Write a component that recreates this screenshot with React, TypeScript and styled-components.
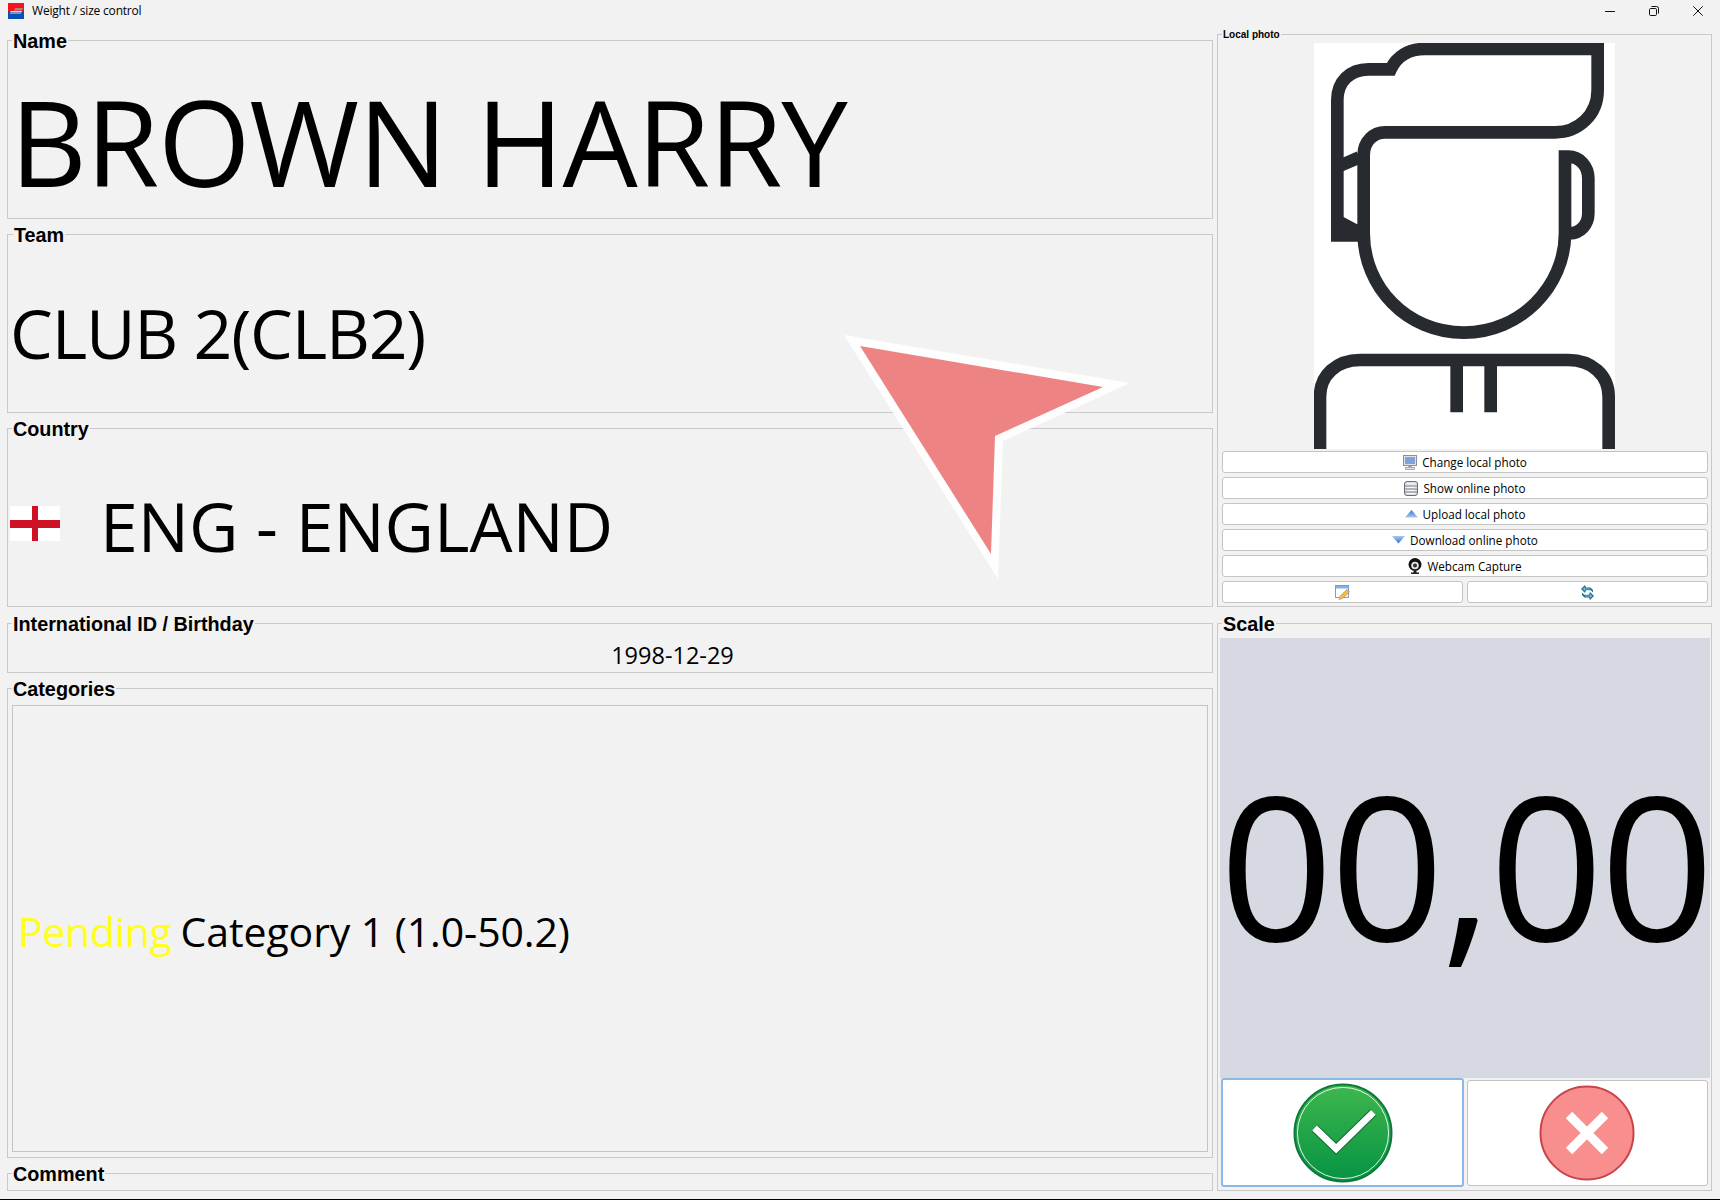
import React from "react";
import styled, { createGlobalStyle } from "styled-components";

const Global = createGlobalStyle`
  html, body { margin: 0; padding: 0; background: #f2f2f2; }
  * { box-sizing: border-box; }
`;

const UI = `"Open Sans", "Noto Sans", sans-serif`;

const Page = styled.div`
  width: 1720px;
  height: 1200px;
  background: #f2f2f2;
  border-bottom: 1px solid #000;
  display: flex;
  flex-direction: column;
  position: relative;
  overflow: hidden;
  font-family: ${UI};
  color: #000;
`;

const TitleBar = styled.header`
  height: 27px;
  flex: none;
  display: flex;
  align-items: center;
  padding: 0 17px 5px 8px;
  gap: 8px;
  font-size: 12px;
  letter-spacing: -0.2px;
  line-height: 16px;
`;

const TitleText = styled.span`
  flex: 1;
`;

const WindowControls = styled.div`
  display: flex;
  gap: 34px;
  align-items: center;
`;

const Columns = styled.main`
  flex: 1;
  display: grid;
  grid-template-columns: 1206px 495px;
  column-gap: 4px;
  padding: 0 8px 8px 7px;
  min-height: 0;
`;

const LeftColumn = styled.div`
  display: flex;
  flex-direction: column;
  padding-top: 2px;
`;

const RightColumn = styled.div`
  display: flex;
  flex-direction: column;
`;

const Group = styled.fieldset<{ $h: number; $mt?: number }>`
  margin: ${(p) => p.$mt ?? 0}px 0 0;
  padding: 0;
  min-width: 0;
  height: ${(p) => p.$h}px;
  border: 1px solid #c9c9c9;
  flex: none;
`;

const Legend = styled.legend<{ $small?: boolean; $x?: number }>`
  margin-left: ${(p) => p.$x ?? 4}px;
  padding: 0 1px;
  height: ${(p) => (p.$small ? 14 : 22)}px;
  font-family: "Liberation Sans", Arial, sans-serif;
  font-weight: 700;
  font-size: ${(p) => (p.$small ? 10 : 19.8)}px;
  line-height: ${(p) => (p.$small ? 16 : 24)}px;
`;

const BigValue = styled.div<{ $size: number; $pad: number; $bottom?: number; $shift?: number; $spacing?: number }>`
  height: 177px;
  display: flex;
  align-items: center;
  padding: ${(p) => p.$shift ?? 0}px 0 ${(p) => p.$bottom ?? 0}px ${(p) => p.$pad}px;
  font-size: ${(p) => p.$size}px;
  letter-spacing: ${(p) => p.$spacing ?? 0}px;
  line-height: 1;
  white-space: nowrap;
`;

const Flag = styled.svg`
  flex: none;
  margin-right: 40px;
  margin-top: -5px;
`;

const BirthRow = styled.div`
  height: 38px;
  padding: 6px 0 0 125px;
  display: flex;
  align-items: center;
  justify-content: center;
  font-size: 23.5px;
  line-height: 1;
`;

const CategoryBox = styled.div`
  margin: 6px 4px 0;
  height: 447px;
  border: 1px solid #c4c4c4;
  display: flex;
  align-items: center;
  padding: 5px 0 0 5px;
  font-size: 41px;
  letter-spacing: -0.1px;
  white-space: nowrap;
`;

const Pending = styled.span`
  color: #ffff1e;
  letter-spacing: -0.3px;
  margin-right: 9px;
`;

const PhotoFrame = styled.div`
  display: flex;
  justify-content: center;
  margin-top: 2px;
  height: 406px;
`;

const PhotoActions = styled.div`
  display: grid;
  grid-template-columns: 1fr 1fr;
  gap: 4px;
  padding: 2px 3px 0 4px;
`;

const ActionButton = styled.button<{ $half?: boolean }>`
  grid-column: ${(p) => (p.$half ? "auto" : "1 / -1")};
  height: 22px;
  background: #fff;
  border: 1px solid #c4c4c4;
  border-radius: 3px;
  padding: 0;
  display: flex;
  align-items: center;
  justify-content: center;
  gap: 5px;
  font-family: ${UI};
  font-size: 11.7px;
  color: #000;
`;

const ScaleDisplay = styled.div`
  margin: 4px 1px 0 2px;
  height: 440px;
  padding-top: 11px;
  background: #d6d9e2;
  display: flex;
  align-items: center;
  justify-content: center;
  font-size: 200px;
  line-height: 1;
  letter-spacing: -3.5px;
  overflow: hidden;
`;

const ScaleActions = styled.div`
  display: grid;
  grid-template-columns: 243px 241px;
  column-gap: 3px;
  padding: 0 3px;
`;

const ConfirmButton = styled.button<{ $focused?: boolean }>`
  height: ${(p) => (p.$focused ? 109 : 106)}px;
  margin-top: ${(p) => (p.$focused ? 0 : 2)}px;
  background: #fff;
  border: ${(p) => (p.$focused ? "2px solid #8ab8e8" : "1px solid #c2c2c2")};
  border-radius: 3px;
  padding: ${(p) => (p.$focused ? "0" : "0 2px 0 0")};
  display: flex;
  align-items: center;
  justify-content: center;
`;

const ArrowOverlay = styled.svg`
  position: absolute;
  left: 840px;
  top: 330px;
  pointer-events: none;
`;

const AppIcon = () => (
  <svg width="16" height="16" viewBox="0 0 16 16">
    <rect width="16" height="8" fill="#f4141c" />
    <rect y="8" width="16" height="8" fill="#0a4fb4" />
    <path d="M7 5h8l-1 2.500H6z" fill="#b08080" />
    <path d="M2 8h12l-.5 1.500H3z" fill="#d8d8e0" />
    <path d="M2 9.500h11v1.500H2z" fill="#8a94a8" />
  </svg>
);

const Minimize = () => (
  <svg width="10" height="10" viewBox="0 0 10 10">
    <path d="M0 5.500h10" stroke="#111" strokeWidth="1" />
  </svg>
);
const Restore = () => (
  <svg width="10" height="10" viewBox="0 0 10 10" fill="none" stroke="#111">
    <rect x=".5" y="2.500" width="7" height="7" rx="1.200" />
    <path d="M2.500 .5h5a2 2 0 0 1 2 2v5" />
  </svg>
);
const Close = () => (
  <svg width="10" height="10" viewBox="0 0 10 10">
    <path d="M.3 .3l9.400 9.400M9.700 .3L.3 9.700" stroke="#111" strokeWidth="1" />
  </svg>
);

const Avatar = () => (
  <svg width="301" height="406" viewBox="342 129 903 1218">
    <rect x="342" y="129" width="903" height="1218" fill="#fff" />
    <g fill="none" stroke="#272b30" strokeWidth="38">
      <path d="M412 705V300C412 245 450 208 505 208H572C590 170 625 147 675 147H1193V270C1193 345 1135 397 1065 397H555C520 397 491 425 491 465V700C491 860 620 998 792 998C960 998 1095 860 1095 700V470H1105C1140 470 1165 500 1165 535V640C1165 675 1140 700 1110 700" />
      <path d="M418 498L478 472" />
      <path d="M360 1347V1190C360 1125 410 1080 480 1080H1105C1175 1080 1226 1125 1226 1190V1347" />
      <path d="M770 1085V1237M872 1085V1237" />
    </g>
    <path d="M393 725H490V675L470 672L425 648L393 640Z" fill="#272b30" />
  </svg>
);

const MonitorIcon = () => (
  <svg width="14" height="15" viewBox="0 0 14 15">
    <rect x=".5" y=".5" width="13" height="10" fill="#dfe3ea" stroke="#8a8f96" />
    <rect x="2" y="2" width="10" height="7" fill="#7fa2d8" />
    <path d="M5 11h4v1.500H5z" fill="#a8acb2" />
    <rect x="2.500" y="12.500" width="9" height="2" fill="#e2e4e6" stroke="#8a8f96" strokeWidth=".7" />
  </svg>
);
const DatabaseIcon = () => (
  <svg width="14" height="15" viewBox="0 0 14 15">
    <rect x=".5" y=".5" width="13" height="14" rx="2.500" fill="#dfe1e4" stroke="#6a6f75" />
    <path d="M1 5h12M1 8h12M1 11h12" fill="none" stroke="#80858b" />
    <path d="M3 3h8M3 6.500h8M3 9.500h8M3 12.500h8" fill="none" stroke="#f6f6f6" />
  </svg>
);
const UpIcon = () => (
  <svg width="13" height="8" viewBox="0 0 13 8">
    <defs>
      <linearGradient id="up" x1="0" y1="0" x2="0" y2="1">
        <stop offset="0" stopColor="#3b76d6" />
        <stop offset="1" stopColor="#a8c8f0" />
      </linearGradient>
    </defs>
    <path d="M6.500 0L13 7.500H0z" fill="url(#up)" />
  </svg>
);
const DownIcon = () => (
  <svg width="13" height="8" viewBox="0 0 13 8">
    <defs>
      <linearGradient id="down" x1="0" y1="0" x2="0" y2="1">
        <stop offset="0" stopColor="#a8c8f0" />
        <stop offset="1" stopColor="#3570d0" />
      </linearGradient>
    </defs>
    <path d="M0 0h13L6.500 7.500z" fill="url(#down)" />
  </svg>
);
const WebcamIcon = () => (
  <svg width="14" height="16" viewBox="0 0 14 16">
    <ellipse cx="7" cy="6.500" rx="6.500" ry="6.500" fill="#111" />
    <circle cx="7" cy="7.500" r="3.800" fill="#e4e4e4" />
    <circle cx="7" cy="7.500" r="2" fill="#333" />
    <path d="M5.500 13h3v1.500h-3zM3 14.500h8V16H3z" fill="#222" />
  </svg>
);
const NoteIcon = () => (
  <svg width="16" height="16" viewBox="0 -1 16 16">
    <rect x=".5" y=".5" width="13" height="12" fill="#fff" stroke="#7a9cc8" />
    <rect x="1" y="1" width="12" height="2.500" fill="#86b0e4" />
    <path d="M4 14.500l1.200-3.500L12 4.500l2.500 2.500L7.500 13.500z" fill="#f2bc48" stroke="#b87820" strokeWidth=".6" />
    <path d="M4 14.500l1.200-3.500 2.300 2.500z" fill="#d8b890" />
  </svg>
);
const SyncIcon = () => (
  <svg width="13" height="15" viewBox="0 0 13 15" fill="#1f6f8f">
    <path d="M4 0L5 2.500H9.500L12 5V7.500L9.800 5.200H5L4 8L0 4Z" />
    <path d="M9 15L8 12.500H3.500L1 10V7.500L3.200 9.800H8L9 7L13 11Z" />
    <path d="M4 2L1.500 4L4 6V4.500H9V3.500H4Z" fill="#7fb8d0" />
    <path d="M9 13L11.500 11L9 9V10.500H4V11.500H9Z" fill="#7fb8d0" />
  </svg>
);

const CheckBadge = () => (
  <svg width="100" height="100" viewBox="0 0 102 102">
    <defs>
      <linearGradient id="ok" x1="0" y1="0" x2="0" y2="1">
        <stop offset="0" stopColor="#3fb74d" />
        <stop offset="1" stopColor="#059343" />
      </linearGradient>
    </defs>
    <circle cx="51" cy="51" r="49.500" fill="url(#ok)" stroke="#0a7a3c" strokeWidth="2" />
    <circle cx="51" cy="51" r="46.500" fill="none" stroke="#fff" strokeWidth=".9" />
    <path d="M22 46L44 67L82 30" fill="none" stroke="#0a6a34" strokeWidth="9" />
    <path d="M22 46L44 67L82 30" fill="none" stroke="#fff" strokeWidth="7" />
  </svg>
);
const CrossBadge = () => (
  <svg width="96" height="96" viewBox="0 0 96 96">
    <circle cx="48" cy="48" r="46.500" fill="#f88e8e" stroke="#c8444a" strokeWidth="2" />
    <path d="M30 30L66 66M66 30L30 66" stroke="#fff" strokeWidth="9" />
  </svg>
);

const photoButtons: { label: string; icon: React.ReactNode }[] = [
  { label: "Change local photo", icon: <MonitorIcon /> },
  { label: "Show online photo", icon: <DatabaseIcon /> },
  { label: "Upload local photo", icon: <UpIcon /> },
  { label: "Download online photo", icon: <DownIcon /> },
  { label: "Webcam Capture", icon: <WebcamIcon /> },
];

export default function App() {
  return (
    <Page>
      <Global />
      <TitleBar>
        <AppIcon />
        <TitleText>Weight / size control</TitleText>
        <WindowControls>
          <Minimize />
          <Restore />
          <Close />
        </WindowControls>
      </TitleBar>
      <Columns>
        <LeftColumn>
          <Group $h={190}>
            <Legend>Name</Legend>
            <BigValue $size={119} $pad={2} $shift={3} $spacing={-1.2}>BROWN HARRY</BigValue>
          </Group>
          <Group $h={190} $mt={4}>
            <Legend $x={5}>Team</Legend>
            <BigValue $size={68} $pad={2} $bottom={2} $spacing={-1.2}>CLUB 2(CLB2)</BigValue>
          </Group>
          <Group $h={190} $mt={4}>
            <Legend>Country</Legend>
            <BigValue $size={68} $pad={2} $bottom={4}>
              <Flag width="50" height="35" viewBox="0 0 50 35">
                <rect width="50" height="35" fill="#fff" />
                <rect y="14" width="50" height="8" fill="#ce1124" />
                <rect x="22" width="6" height="35" fill="#ce1124" />
              </Flag>
              ENG - ENGLAND
            </BigValue>
          </Group>
          <Group $h={61} $mt={5}>
            <Legend>International ID / Birthday</Legend>
            <BirthRow>1998-12-29</BirthRow>
          </Group>
          <Group $h={481} $mt={4}>
            <Legend>Categories</Legend>
            <CategoryBox>
              <Pending>Pending</Pending>Category 1 (1.0-50.2)
            </CategoryBox>
          </Group>
          <Group $h={29} $mt={4}>
            <Legend>Comment</Legend>
          </Group>
        </LeftColumn>
        <RightColumn>
          <Group $h={580}>
            <Legend $small>Local photo</Legend>
            <PhotoFrame>
              <Avatar />
            </PhotoFrame>
            <PhotoActions>
              {photoButtons.map((b) => (
                <ActionButton key={b.label}>
                  {b.icon}
                  {b.label}
                </ActionButton>
              ))}
              <ActionButton $half>
                <NoteIcon />
              </ActionButton>
              <ActionButton $half>
                <SyncIcon />
              </ActionButton>
            </PhotoActions>
          </Group>
          <Group $h={579} $mt={5}>
            <Legend>Scale</Legend>
            <ScaleDisplay>00,00</ScaleDisplay>
            <ScaleActions>
              <ConfirmButton $focused>
                <CheckBadge />
              </ConfirmButton>
              <ConfirmButton>
                <CrossBadge />
              </ConfirmButton>
            </ScaleActions>
          </Group>
        </RightColumn>
      </Columns>
      <ArrowOverlay width="300" height="260" viewBox="840 330 300 260">
        <polygon points="844,335 1130,383 1003,441 998,579" fill="rgba(255,255,255,.92)" />
        <polygon points="860,346 1103,387 995,436 991,554" fill="rgba(232,100,100,.8)" />
      </ArrowOverlay>
    </Page>
  );
}
